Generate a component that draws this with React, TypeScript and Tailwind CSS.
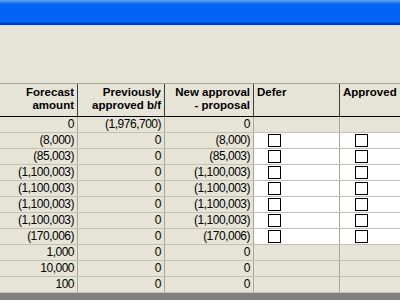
type Row = {
  forecast: string;
  previous: string;
  proposal: string;
  editable: boolean;
};

const rows: Row[] = [
  { forecast: "0", previous: "(1,976,700)", proposal: "0", editable: false },
  { forecast: "(8,000)", previous: "0", proposal: "(8,000)", editable: true },
  { forecast: "(85,003)", previous: "0", proposal: "(85,003)", editable: true },
  { forecast: "(1,100,003)", previous: "0", proposal: "(1,100,003)", editable: true },
  { forecast: "(1,100,003)", previous: "0", proposal: "(1,100,003)", editable: true },
  { forecast: "(1,100,003)", previous: "0", proposal: "(1,100,003)", editable: true },
  { forecast: "(1,100,003)", previous: "0", proposal: "(1,100,003)", editable: true },
  { forecast: "(170,006)", previous: "0", proposal: "(170,006)", editable: true },
  { forecast: "1,000", previous: "0", proposal: "0", editable: false },
  { forecast: "10,000", previous: "0", proposal: "0", editable: false },
  { forecast: "100", previous: "0", proposal: "0", editable: false },
];

const cols = "grid grid-cols-[78px_87px_89px_86px_60px]";

const Check = () => (
  <span className="block w-[13px] h-[13px] border border-black bg-white" />
);

const App = () => {
  return (
    <div className="w-[400px] h-[300px] overflow-hidden flex flex-col bg-[#e6e4d6] text-black font-['Liberation_Sans',Arial,sans-serif]">
      {/* window caption */}
      <div className="h-[25px] shrink-0 flex flex-col">
        <div className="h-[2px] bg-[#4b9af7]" />
        <div className="h-[2px] bg-[#1a76f2]" />
        <div className="flex-1 bg-gradient-to-b from-[#0663f8] to-[#0062f6]" />
        <div className="h-[1px] bg-[#0051d8]" />
        <div className="h-[2px] bg-[#0a34b0]" />
      </div>

      <div className="flex-1" />

      {/* grid header */}
      <div className={`${cols} h-[34px] shrink-0 border-t border-b border-t-[#a5a391] border-b-black text-[11.5px] leading-[13px] font-bold`}>
        <div className="border-r border-[#3c3c3c] pt-[2px] pr-[3px] text-right">
          Forecast
          <br />
          amount
        </div>
        <div className="border-r border-[#3c3c3c] pt-[2px] pr-[3px] text-right">
          Previously
          <br />
          approved b/f
        </div>
        <div className="border-r border-[#3c3c3c] pt-[2px] pr-[3px] text-right">
          New approval
          <br />- proposal
        </div>
        <div className="border-r border-[#3c3c3c] pt-[2px] pl-[3px]">Defer</div>
        <div className="pt-[2px] pl-[3px]">Approved</div>
      </div>

      {/* grid body */}
      <div className="shrink-0 text-[12px] tracking-[-0.5px]">
        {rows.map((r, i) => (
          <div key={i} className={`${cols} h-[16px] border-b border-[#c3c1b2]`}>
            <div className="border-r border-[#a9a797] pr-[3px] text-right leading-[15px]">{r.forecast}</div>
            <div className="border-r border-[#a9a797] pr-[3px] text-right leading-[15px]">{r.previous}</div>
            <div className="border-r border-[#a9a797] pr-[3px] text-right leading-[15px]">{r.proposal}</div>
            <div className={`border-r border-[#a9a797] pl-[14px] flex items-center ${r.editable ? "bg-white" : ""}`}>
              {r.editable && <Check />}
            </div>
            <div className={`pl-[15px] flex items-center ${r.editable ? "bg-white" : ""}`}>
              {r.editable && <Check />}
            </div>
          </div>
        ))}
      </div>

      <div className="h-[7px] shrink-0 bg-[#808080]" />
    </div>
  );
};

export default App;
